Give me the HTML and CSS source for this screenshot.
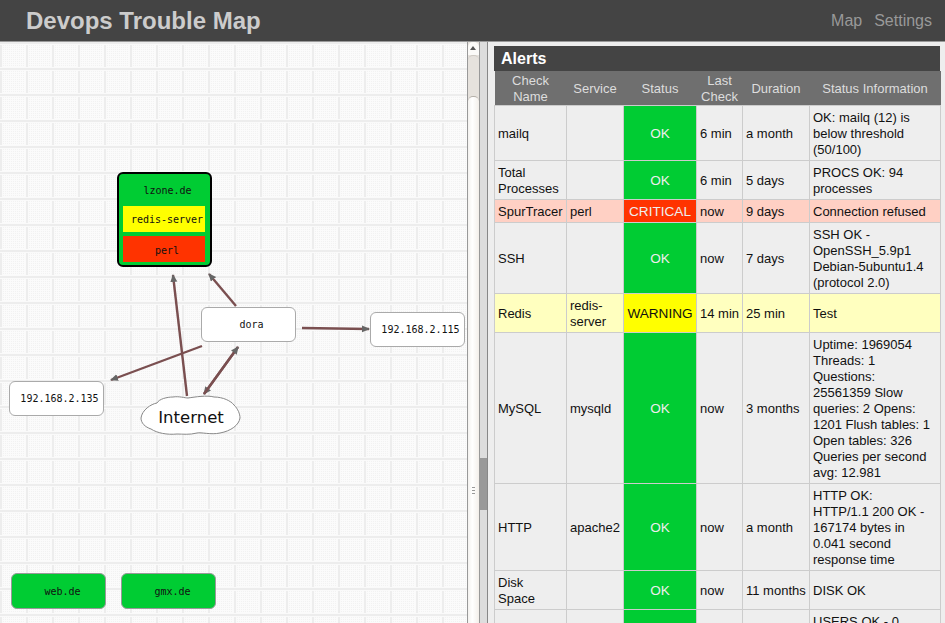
FILE: index.html
```html
<!DOCTYPE html>
<html lang="en">

<head>
    <meta charset="UTF-8">
    <meta name="viewport" content="width=device-width, initial-scale=1.0">
    <title>Devops Trouble Map</title>

    <link rel="stylesheet" href="styles.css">
</head>

<body>
    <header class="topbar">
        <h1 class="brand">Devops Trouble Map</h1>
        <nav class="topnav">
            <a href="#">Map</a>
            <a href="#">Settings</a>
        </nav>
    </header>

    <main class="layout">
        <section class="map-pane">
            <div class="canvas">
                <svg class="edges" width="468" height="581" viewBox="0 42 468 581">
                    <defs>
                        <marker id="head" markerWidth="8" markerHeight="8" refX="7" refY="3.5" orient="auto" markerUnits="userSpaceOnUse">
                            <path d="M0 0 L8 3.5 L0 7 Z" fill="#666"></path>
                        </marker>
                    </defs>
                    <line x1="236" y1="306" x2="209" y2="274" marker-end="url(#head)"></line>
                    <line x1="187" y1="396" x2="173" y2="275" marker-end="url(#head)"></line>
                    <line x1="202" y1="346" x2="111" y2="380" marker-end="url(#head)"></line>
                    <line x1="238" y1="347" x2="204" y2="394" marker-end="url(#head)"></line>
                    <line x1="204" y1="394" x2="238" y2="347" marker-end="url(#head)"></line>
                    <line x1="302" y1="328" x2="369" y2="329" marker-end="url(#head)"></line>
                </svg>

                <div class="node node-group">
                    <div class="group-title">lzone.de</div>
                    <div class="group-item item-warning">redis-server</div>
                    <div class="group-item item-critical">perl</div>
                </div>
                <div class="node node-host node-dora">dora</div>
                <div class="node node-host node-115">192.168.2.115</div>
                <div class="node node-host node-135">192.168.2.135</div>
                <div class="node node-host node-ok node-web">web.de</div>
                <div class="node node-host node-ok node-gmx">gmx.de</div>

                <svg class="cloud" width="103" height="42" viewBox="0 0 103 42">
                    <path d="M2 23 C3 15 12 9 18 8 C20 4 28 2 34 2 C40 1 46 3 49 3 C56 2 68 0 75 2 C84 2 92 6 95 10 C99 14 101 19 101 23 C100 30 92 36 81 38 C72 40 62 37 58 38 C50 40 44 39 38 39 C28 40 18 38 12 34 C6 32 2 28 2 23 Z"></path>
                    <text x="52" y="28">Internet</text>
                </svg>
            </div>
            <div class="pane-scroll">
                <div class="scroll-btn"></div>
                <div class="scroll-track"></div>
                <div class="scroll-thumb"><span class="grip"></span></div>
            </div>
        </section>

        <div class="splitter">
            <div class="splitter-thumb"></div>
        </div>

        <section class="alerts-pane">
            <div class="alerts-title">Alerts</div>
            <table class="alerts">
                <colgroup>
                    <col class="col-name">
                    <col class="col-service">
                    <col class="col-status">
                    <col class="col-check">
                    <col class="col-duration">
                    <col class="col-info">
                </colgroup>
                <thead>
                    <tr>
                        <th>Check Name</th>
                        <th>Service</th>
                        <th>Status</th>
                        <th>Last Check</th>
                        <th>Duration</th>
                        <th>Status Information</th>
                    </tr>
                </thead>
                <tbody>
                    <tr>
                        <td>mailq</td>
                        <td></td>
                        <td class="status ok">OK</td>
                        <td>6 min</td>
                        <td>a month</td>
                        <td>OK: mailq (12) is below threshold (50/100)</td>
                    </tr>
                    <tr>
                        <td>Total Processes</td>
                        <td></td>
                        <td class="status ok">OK</td>
                        <td>6 min</td>
                        <td>5 days</td>
                        <td>PROCS OK: 94 processes</td>
                    </tr>
                    <tr class="row-critical">
                        <td>SpurTracer</td>
                        <td>perl</td>
                        <td class="status critical">CRITICAL</td>
                        <td>now</td>
                        <td>9 days</td>
                        <td>Connection refused</td>
                    </tr>
                    <tr>
                        <td>SSH</td>
                        <td></td>
                        <td class="status ok">OK</td>
                        <td>now</td>
                        <td>7 days</td>
                        <td>SSH OK - OpenSSH_5.9p1 Debian-5ubuntu1.4 (protocol 2.0)</td>
                    </tr>
                    <tr class="row-warning">
                        <td>Redis</td>
                        <td>redis-server</td>
                        <td class="status warning">WARNING</td>
                        <td>14 min</td>
                        <td>25 min</td>
                        <td>Test</td>
                    </tr>
                    <tr>
                        <td>MySQL</td>
                        <td>mysqld</td>
                        <td class="status ok">OK</td>
                        <td>now</td>
                        <td>3 months</td>
                        <td>Uptime: 1969054 Threads: 1 Questions:<br>25561359 Slow<br>queries: 2 Opens:<br>1201 Flush tables: 1<br>Open tables: 326<br>Queries per second<br>avg: 12.981</td>
                    </tr>
                    <tr>
                        <td>HTTP</td>
                        <td>apache2</td>
                        <td class="status ok">OK</td>
                        <td>now</td>
                        <td>a month</td>
                        <td>HTTP OK:<br>HTTP/1.1 200 OK - 167174 bytes in 0.041 second response time</td>
                    </tr>
                    <tr>
                        <td>Disk<br>Space</td>
                        <td></td>
                        <td class="status ok">OK</td>
                        <td>now</td>
                        <td>11 months</td>
                        <td>DISK OK</td>
                    </tr>
                    <tr class="row-last">
                        <td></td>
                        <td></td>
                        <td class="status ok"></td>
                        <td></td>
                        <td></td>
                        <td>USERS OK - 0</td>
                    </tr>
                </tbody>
            </table>
        </section>
    </main>
</body>

</html>
```

FILE: styles.css
```css
html,
body {
    height: 100%;
}

body {
    margin: 0;
    display: flex;
    flex-direction: column;
    overflow: hidden;
    font-family: "Liberation Sans", Arial, sans-serif;
    font-size: 13px;
    line-height: 16px;
    color: #111;
}

.topbar {
    flex: none;
    height: 41px;
    display: flex;
    justify-content: space-between;
    align-items: center;
    padding: 0 13px 0 26px;
    background: #444;
    border-bottom: 1px solid #999;
}

.brand {
    margin: 0;
    font-size: 24px;
    line-height: 28px;
    font-weight: bold;
    color: #ccc;
}

.topnav {
    display: flex;
    gap: 12px;
    font-size: 16px;
}

.topnav a {
    color: #999;
    text-decoration: none;
}

.layout {
    flex: 1;
    min-height: 0;
    display: flex;
}

.map-pane {
    flex: none;
    width: 480px;
    display: flex;
}

.canvas {
    position: relative;
    flex: none;
    width: 467px;
    background-color: #f2f2f2;
    background-image:
        linear-gradient(#fafafa 0 1px, #ededed 1px 3px, #fafafa 3px 4px, transparent 4px),
        linear-gradient(90deg, #fafafa 0 1px, #ededed 1px 3px, #fafafa 3px 4px, transparent 4px),
        linear-gradient(#fbfbfb 1px, transparent 1px),
        linear-gradient(90deg, #fbfbfb 1px, transparent 1px);
    background-size: 26px 26px, 26px 26px, 2px 2px, 2px 2px;
    background-position: 0 -1px, -1px 0, 0 0, 0 0;
    overflow: hidden;
}

.edges {
    position: absolute;
    left: 0;
    top: 0;
}

.edges line {
    stroke: #7a4f50;
    stroke-width: 2.4;
}

.node {
    position: absolute;
    box-sizing: border-box;
    width: 95px;
    font-family: "DejaVu Sans Mono", monospace;
    font-size: 10px;
    color: #111;
    text-align: center;
}

.node-host {
    height: 35px;
    line-height: 33px;
    padding-left: 6px;
    background: #fff;
    border: 1px solid #aaa;
    border-radius: 6px;
}

.node-ok {
    height: 36px;
    line-height: 36px;
    padding-left: 8px;
    background: #00cc33;
    border-color: #999;
}

.node-dora {
    left: 201px;
    top: 265px;
}

.node-115 {
    left: 370px;
    top: 270px;
}

.node-135 {
    left: 9px;
    top: 339px;
}

.node-web {
    left: 11px;
    top: 531px;
}

.node-gmx {
    left: 121px;
    top: 531px;
}

.node-group {
    left: 117px;
    top: 130px;
    height: 95px;
    padding: 4px 5px 0 4px;
    background: #00cc33;
    border: 2px solid #000;
    border-radius: 6px;
}

.group-title {
    height: 24px;
    line-height: 26px;
    padding-left: 7px;
    margin-bottom: 4px;
}

.group-item {
    height: 26px;
    line-height: 28px;
    padding-left: 6px;
    margin-bottom: 4px;
    white-space: nowrap;
}

.item-warning {
    background: #ffff00;
}

.item-critical {
    background: #ff3300;
    line-height: 30px;
}

.cloud {
    position: absolute;
    left: 139px;
    top: 353px;
}

.cloud path {
    fill: #fff;
    stroke: #888;
    stroke-width: 1;
}

.cloud text {
    font-family: "DejaVu Sans", sans-serif;
    font-size: 16.5px;
    fill: #111;
    text-anchor: middle;
}

.pane-scroll {
    position: relative;
    flex: none;
    width: 13px;
    box-sizing: border-box;
    background: #e6e2dd;
    border-left: 1px solid #999;
    border-right: 1px solid #999;
}

.scroll-btn {
    height: 13px;
    background: #fbfaf8;
    border-radius: 5px 5px 0 0;
    position: relative;
}

.scroll-btn::after {
    content: "";
    position: absolute;
    left: 2px;
    top: 4px;
    border-left: 3px solid transparent;
    border-right: 3px solid transparent;
    border-bottom: 4px solid #555;
}

.scroll-track {
    height: 41px;
    border-top: 1px solid #cfcac4;
    border-radius: 5px 5px 0 0;
    box-sizing: border-box;
}

.scroll-thumb {
    position: absolute;
    left: 0;
    right: 0;
    top: 54px;
    bottom: 0;
    background: linear-gradient(90deg, #f4f2ef, #fff 40%, #f3efea);
    border-top: 1px solid #b5b0aa;
    border-radius: 5px 5px 0 0;
}

.grip {
    position: absolute;
    left: 4px;
    top: 390px;
    width: 3px;
    height: 7px;
    background: repeating-linear-gradient(#999 0 1px, transparent 1px 3px);
}

.splitter {
    position: relative;
    flex: none;
    width: 8px;
    background: #ddd;
    border-right: 1px solid #888;
    box-sizing: border-box;
}

.splitter-thumb {
    position: absolute;
    left: 0;
    right: 0;
    top: 416px;
    height: 52px;
    background: #999;
}

.alerts-pane {
    flex: 1;
    min-width: 0;
    padding: 4px 4px 0 6px;
    background: #eee;
    overflow: hidden;
}

.alerts-title {
    width: 446px;
    height: 25px;
    box-sizing: border-box;
    padding: 4px 7px 0;
    font-size: 16px;
    line-height: 18px;
    font-weight: bold;
    color: #fff;
    background: #444;
}

.alerts {
    width: 446px;
    table-layout: fixed;
    border-collapse: collapse;
}

.col-name {
    width: 72px;
}

.col-service {
    width: 57px;
}

.col-status {
    width: 73px;
}

.col-check {
    width: 46px;
}

.col-duration {
    width: 67px;
}

.col-info {
    width: 131px;
}

.alerts th {
    padding: 2px 2px 0;
    font-weight: normal;
    color: #ddd;
    background: #6f6f6f;
    text-align: center;
}

.alerts td {
    padding: 4px 2px 2px 3px;
    background: #eee;
    border: 1px solid #ccc;
    vertical-align: middle;
}

.row-critical td {
    background: #ffd0c4;
}

.row-warning td {
    background: #ffffbf;
}

.row-last td {
    vertical-align: top;
    height: 60px;
}

.alerts td.status {
    padding-left: 0;
    padding-right: 0;
    font-size: 13.6px;
    text-align: center;
}

.alerts td.ok {
    background: #00cc33;
    color: #eee;
}

.alerts td.critical {
    background: #ff3300;
    color: #eee;
}

.alerts td.warning {
    background: #ffff00;
    color: #111;
}
```
